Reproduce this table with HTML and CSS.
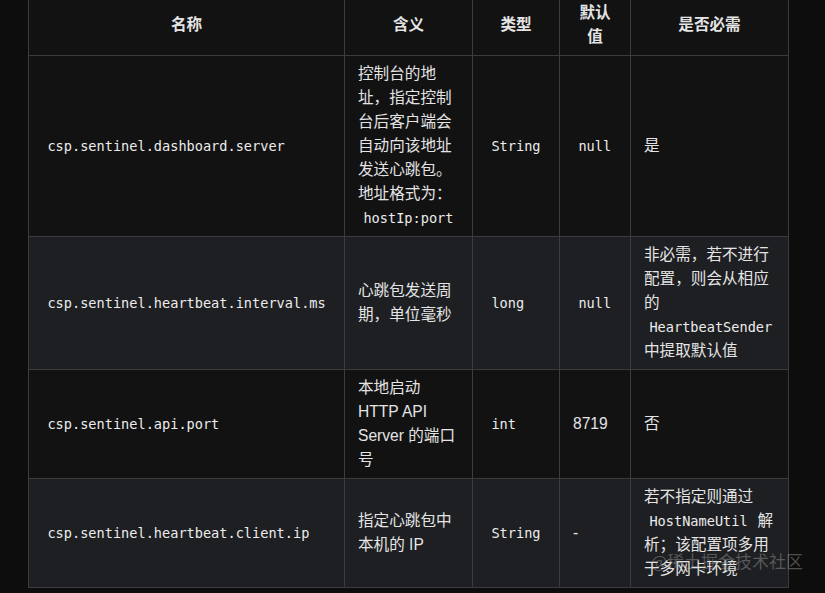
FILE: index.html
```html
<!DOCTYPE html>
<html lang="zh-CN">
<head>
<meta charset="utf-8">
<title>Sentinel 配置</title>
<link rel="stylesheet" href="styles.css">
</head>
<body>
<div class="page">
  <table class="md-table">
    <colgroup>
      <col class="c-name">
      <col class="c-desc">
      <col class="c-type">
      <col class="c-def">
      <col class="c-req">
    </colgroup>
    <thead>
      <tr>
        <th>名称</th>
        <th>含义</th>
        <th>类型</th>
        <th>默认值</th>
        <th>是否必需</th>
      </tr>
    </thead>
    <tbody>
      <tr>
        <td><code>csp.sentinel.dashboard.server</code></td>
        <td>控制台的地址，指定控制台后客户端会自动向该地址发送心跳包。地址格式为：<code>hostIp:port</code></td>
        <td><code>String</code></td>
        <td><code>null</code></td>
        <td>是</td>
      </tr>
      <tr>
        <td><code>csp.sentinel.heartbeat.interval.ms</code></td>
        <td>心跳包发送周期，单位毫秒</td>
        <td><code>long</code></td>
        <td><code>null</code></td>
        <td>非必需，若不进行配置，则会从相应的<code>HeartbeatSender</code>中提取默认值</td>
      </tr>
      <tr>
        <td><code>csp.sentinel.api.port</code></td>
        <td>本地启动 HTTP API Server 的端口号</td>
        <td><code>int</code></td>
        <td>8719</td>
        <td>否</td>
      </tr>
      <tr>
        <td><code>csp.sentinel.heartbeat.client.ip</code></td>
        <td>指定心跳包中本机的 IP</td>
        <td><code>String</code></td>
        <td>-</td>
        <td>若不指定则通过<code>HostNameUtil</code> 解析；该配置项多用于多网卡环境</td>
      </tr>
    </tbody>
  </table>
  <div class="watermark">@稀土掘金技术社区</div>
</div>
</body>
</html>
```

FILE: styles.css
```css
html, body {
  margin: 0;
  padding: 0;
  background: #0d0d0d;
}

.page {
  position: relative;
  width: 825px;
  height: 593px;
  overflow: hidden;
  padding-left: 28px;
  box-sizing: border-box;
}

.md-table {
  margin-top: -6px;
  border-collapse: collapse;
  table-layout: fixed;
  width: 760px;
  font-family: "Helvetica Neue", "Liberation Sans", "Noto Sans CJK SC", sans-serif;
  font-size: 15.6px;
  line-height: 24px;
  color: #e4e4e4;
}

.c-name { width: 316px; }
.c-desc { width: 128px; }
.c-type { width: 87px; }
.c-def { width: 71px; }
.c-req { width: 158px; }

.md-table th,
.md-table td {
  border: 1px solid #3c3c3e;
  padding: 6px 13px;
  vertical-align: middle;
  text-align: left;
}

.md-table th {
  text-align: center;
  font-weight: 700;
  background: #121213;
}

.md-table tbody tr:nth-child(odd) td {
  background: #121213;
}

.md-table tbody tr:nth-child(even) td {
  background: #1e1f22;
}

.md-table code {
  font-family: "DejaVu Sans Mono", "Liberation Mono", monospace;
  font-size: 13.6px;
  padding: 0.2em 0.4em;
  color: #ececec;
  white-space: nowrap;
}

.watermark {
  position: absolute;
  z-index: 2;
  left: 651px;
  top: 549px;
  font-family: "Noto Sans CJK SC", sans-serif;
  font-size: 17px;
  line-height: 24px;
  color: rgba(200, 200, 200, 0.34);
  white-space: nowrap;
}
```
